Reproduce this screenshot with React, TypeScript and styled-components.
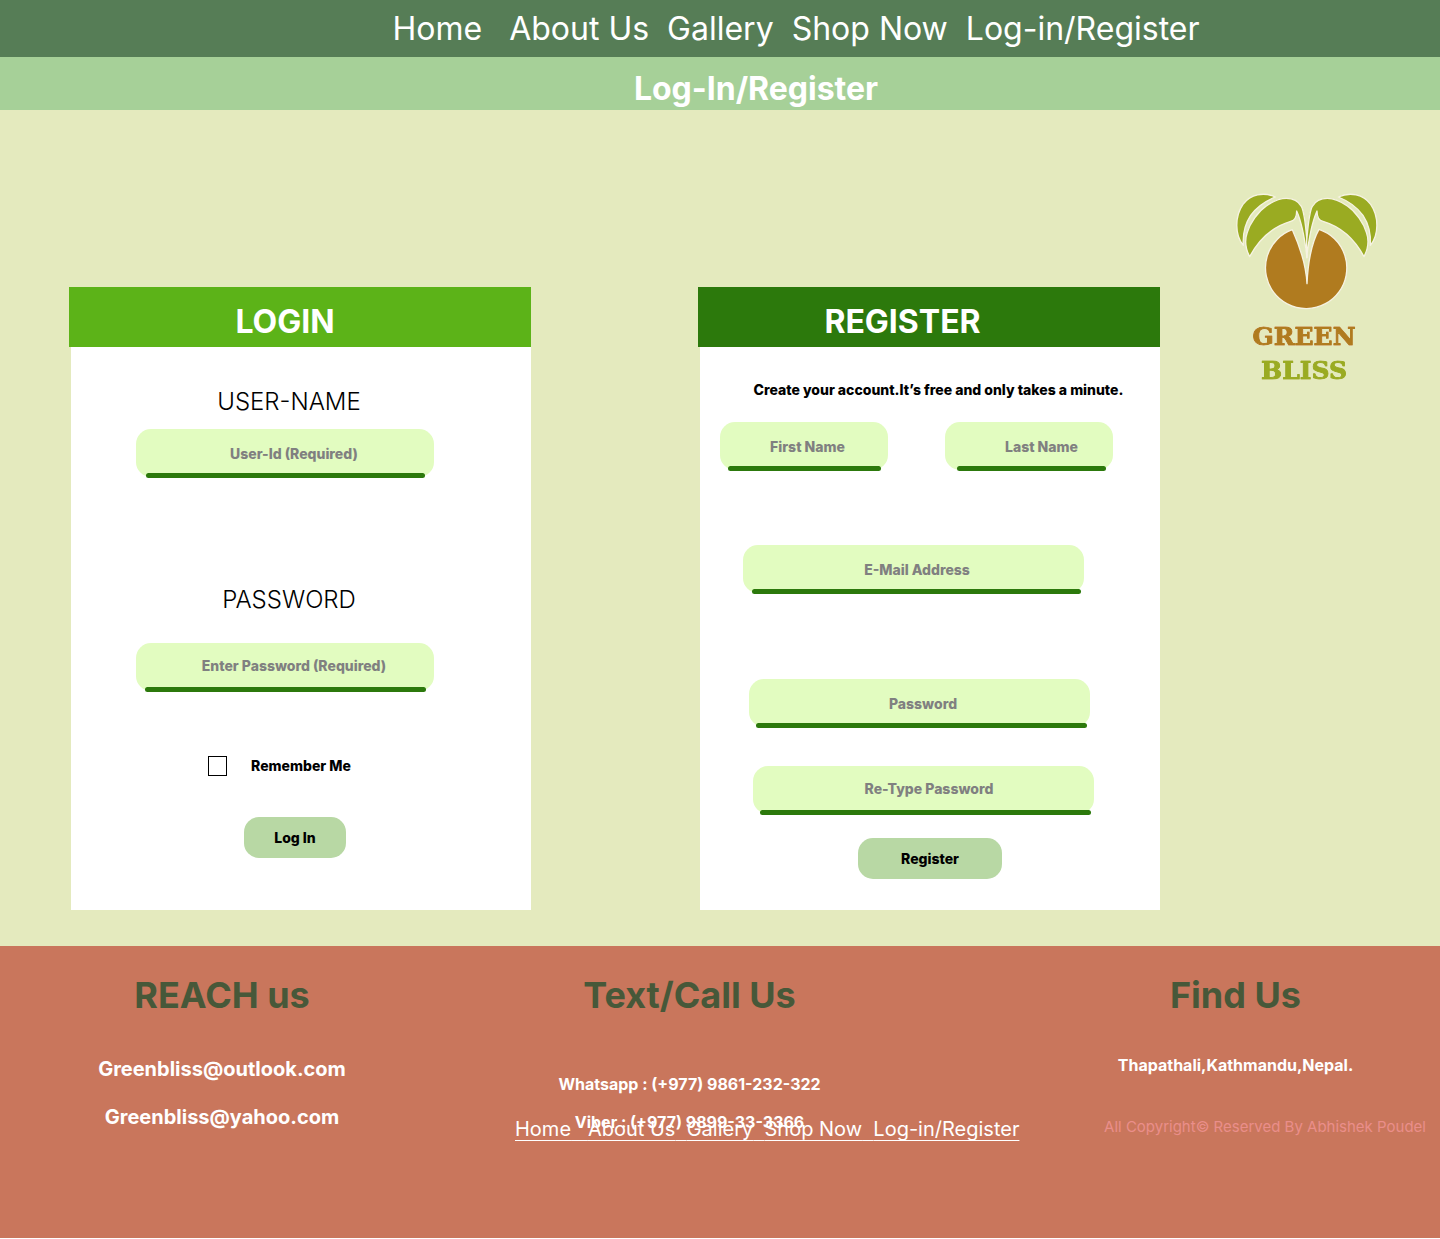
import React from "react";
import styled, { createGlobalStyle } from "styled-components";

const GlobalStyle = createGlobalStyle`
  * { box-sizing: border-box; }
  body {
    margin: 0;
    background: #ffffff;
    font-family: Inter, "Liberation Sans", sans-serif;
    font-optical-sizing: none;
    color: #000000;
  }
  h1, h2, p { margin: 0; }
`;

const Page = styled.div`
  background: #e4eabe;
  overflow-x: hidden;
`;

const TopBar = styled.header`
  padding: 9px 0 8px 152px;
  background: #567d56;
  text-align: center;
`;

const Menu = styled.nav<{ $size: number }>`
  font-size: ${(p) => p.$size}px;
  font-weight: 400;
  line-height: ${(p) => p.$size + 8}px;
  white-space: pre;
  color: #ffffff;
`;

const MenuLink = styled.a`
  color: inherit;
  text-decoration: none;
`;

const TitleBar = styled.div`
  padding: 12px 0 1px 72px;
  background: #a6d098;
  text-align: center;
`;

const PageTitle = styled.h1`
  font-size: 32px;
  font-weight: 700;
  line-height: 40px;
  color: #ffffff;
`;

const Main = styled.main`
  display: grid;
  grid-template-columns: 69fr 462fr 167fr 462fr 76fr 142fr 62fr;
  align-items: start;
  padding: 83px 0 36px;
`;

const Card = styled.form<{ $column: number }>`
  grid-column: ${(p) => p.$column};
  align-self: stretch;
  display: flex;
  flex-direction: column;
  margin-top: 94px;
`;

const CardHeader = styled.div<{ $color: string; $shift: number }>`
  padding: 15px ${(p) => p.$shift}px 5px 0;
  background: ${(p) => p.$color};
  text-align: center;
`;

const CardTitle = styled.h2`
  font-size: 32px;
  font-weight: 700;
  line-height: 40px;
  color: #ffffff;
`;

const CardBody = styled.div`
  flex: 1;
  margin-left: 2px;
  padding: 34px 0 31px;
  background: #ffffff;
`;

const Line = styled.div<{ $top?: number; $left?: number; $right?: number }>`
  display: flex;
  justify-content: center;
  align-items: center;
  gap: 24px;
  margin-top: ${(p) => p.$top ?? 0}px;
  padding-left: ${(p) => p.$left ?? 0}px;
  padding-right: ${(p) => p.$right ?? 0}px;
`;

const NameLine = styled(Line)`
  gap: 57px;
`;

const FieldLabel = styled.label`
  padding-top: 2px;
  font-size: 24px;
  font-weight: 300;
  line-height: 38px;
`;

const Note = styled.p`
  font-size: 14px;
  font-weight: 800;
  line-height: 18px;
`;

const FieldBox = styled.div<{ $width: number; $from: number; $to: number }>`
  position: relative;
  width: ${(p) => p.$width}px;
  max-width: 100%;

  &::after {
    content: "";
    position: absolute;
    left: ${(p) => p.$from}px;
    right: ${(p) => p.$to}px;
    bottom: -1px;
    height: 5px;
    border-radius: 3px;
    background: #2c790c;
  }
`;

const FieldInput = styled.input<{ $indent: number; $raised?: boolean }>`
  display: block;
  width: 100%;
  height: 48px;
  padding: ${(p) => (p.$raised ? "0 0 4px" : "1px 0 0")};
  padding-left: ${(p) => p.$indent}px;
  border: 0;
  border-radius: 15px;
  background: #e2fcc0;
  font-family: inherit;
  font-size: 14px;
  font-weight: 800;
  text-align: center;
  color: #000000;

  &::placeholder {
    color: #808080;
    opacity: 1;
  }
`;

const Tick = styled.input`
  appearance: none;
  width: 19px;
  height: 20px;
  margin: 0;
  border: 1px solid #000000;
  background: #ffffff;

  &:checked {
    background: #2c790c;
  }
`;

const TickLabel = styled.label`
  font-size: 14px;
  font-weight: 800;
  line-height: 20px;
`;

const Submit = styled.button<{ $width: number }>`
  width: ${(p) => p.$width}px;
  height: 41px;
  padding: 0;
  border: 0;
  border-radius: 15px;
  background: #b8d8a4;
  font-family: inherit;
  font-size: 14px;
  font-weight: 800;
  color: #000000;
`;

const Logo = styled.svg`
  grid-column: 6;
  display: block;
  width: 100%;
  height: auto;
  overflow: visible;
`;

const Wordmark = styled.g`
  font-family: "DejaVu Serif", serif;
  font-size: 75px;
  font-weight: 700;
  text-anchor: middle;
  stroke-width: 3px;
  stroke-linejoin: round;
  filter: drop-shadow(0 0 2px #fbf6ec) drop-shadow(0 0 1px #fbf6ec);
`;

const Footer = styled.footer`
  display: grid;
  grid-template-columns: 444fr 491fr 96fr 409fr;
  padding: 26px 0 99px;
  background: #c9765c;
  color: #ffffff;
  text-align: center;
`;

const FooterColumn = styled.section<{ $column: number }>`
  grid-column: ${(p) => p.$column};
  position: relative;
`;

const FooterTitle = styled.h2`
  font-size: 36px;
  font-weight: 700;
  line-height: 46px;
  color: #475839;
`;

const Contact = styled.a<{ $size: number; $top: number }>`
  display: block;
  margin-top: ${(p) => p.$top}px;
  font-size: ${(p) => p.$size}px;
  font-weight: 700;
  line-height: 24px;
  color: #ffffff;
  text-decoration: none;
`;

const Address = styled.p`
  margin-top: 35px;
  font-size: 16px;
  font-weight: 700;
  line-height: 24px;
`;

const Copyright = styled.p`
  margin-top: 38px;
  padding-right: 14px;
  font-size: 15px;
  font-weight: 400;
  line-height: 24px;
  text-align: right;
  color: #ea8e8a;
`;

const FooterMenu = styled.div`
  position: absolute;
  top: 143px;
  left: 71px;
  text-decoration: underline;
  text-decoration-thickness: 1px;
  text-decoration-skip-ink: none;
  text-underline-offset: 4px;
`;

const pages = ["Home   ", "About Us  ", "Gallery  ", "Shop Now  ", "Log-in/Register"];

function SiteMenu({ size, label }: { size: number; label: string }) {
  return (
    <Menu $size={size} aria-label={label}>
      {pages.map((page) => {
        const name = page.trimEnd();
        return (
          <React.Fragment key={name}>
            <MenuLink href="#">{name}</MenuLink>
            {page.slice(name.length)}
          </React.Fragment>
        );
      })}
    </Menu>
  );
}

type FieldProps = {
  id: string;
  hint: string;
  type?: string;
  width: number;
  from: number;
  to: number;
  indent: number;
  raised?: boolean;
  labelled?: boolean;
};

function Field({ id, hint, type = "text", width, from, to, indent, raised, labelled }: FieldProps) {
  return (
    <FieldBox $width={width} $from={from} $to={to}>
      <FieldInput
        id={id}
        type={type}
        placeholder={hint}
        aria-label={labelled ? undefined : hint}
        $indent={indent}
        $raised={raised}
      />
    </FieldBox>
  );
}

function LeafPair() {
  return (
    <>
      <path d="M72 197C46 166 46 110 71 74C94 44 132 36 168 52C138 64 112 82 94 107C76 134 70 166 72 197Z" />
      <path d="M91 231C78 206 76 180 84 158C92 130 116 96 141 79C162 64 182 56 201 56C222 56 238 66 246 80C256 98 258 130 263 184L263 234C258 190 250 134 232 94C232 112 228 122 214 125C160 141 118 180 91 231Z" />
    </>
  );
}

function GreenBlissLogo() {
  return (
    <Logo viewBox="50 40 426 570" role="img" aria-label="Green Bliss">
      <g stroke="#f6f3e2" strokeWidth="4" strokeLinejoin="round">
        <path
          fill="#b07b1f"
          d="M219 150C236 188 260 250 263 312C266 250 276 190 299 149A122 122 0 1 1 219 150Z"
        />
        <g fill="#9aab22">
          <LeafPair />
          <g transform="matrix(-1 0 0 1 525 0)">
            <LeafPair />
          </g>
        </g>
      </g>
      <Wordmark>
        <text x="254" y="497" fill="#b07b1f" stroke="#b07b1f">GREEN</text>
        <text x="254" y="598" fill="#9aab22" stroke="#9aab22">BLISS</text>
      </Wordmark>
    </Logo>
  );
}

export default function App() {
  return (
    <Page>
      <GlobalStyle />
      <TopBar>
        <SiteMenu size={32} label="Main" />
      </TopBar>
      <TitleBar>
        <PageTitle>Log-In/Register</PageTitle>
      </TitleBar>

      <Main>
        <Card $column={2}>
          <CardHeader $color="#5cb318" $shift={30}>
            <CardTitle>LOGIN</CardTitle>
          </CardHeader>
          <CardBody>
            <Line $right={24}>
              <FieldLabel htmlFor="user-id">USER-NAME</FieldLabel>
            </Line>
            <Line $top={8} $right={32}>
              <Field id="user-id" hint="User-Id (Required)" width={298} from={10} to={9} indent={18} labelled />
            </Line>
            <Line $top={102} $right={24}>
              <FieldLabel htmlFor="login-password">PASSWORD</FieldLabel>
            </Line>
            <Line $top={24} $right={32}>
              <Field
                id="login-password"
                type="password"
                hint="Enter Password (Required)"
                width={298}
                from={9}
                to={8}
                indent={18}
                raised
                labelled
              />
            </Line>
            <Line $top={65} $right={43}>
              <Tick id="remember" type="checkbox" />
              <TickLabel htmlFor="remember">Remember Me</TickLabel>
            </Line>
            <Line $top={41} $right={12}>
              <Submit type="button" $width={102}>Log In</Submit>
            </Line>
          </CardBody>
        </Card>

        <Card $column={4}>
          <CardHeader $color="#2c790c" $shift={53}>
            <CardTitle>REGISTER</CardTitle>
          </CardHeader>
          <CardBody>
            <Line $left={17}>
              <Note>Create your account.It’s free and only takes a minute.</Note>
            </Line>
            <NameLine $top={23} $right={27}>
              <Field id="first-name" hint="First Name" width={168} from={8} to={7} indent={7} />
              <Field id="last-name" hint="Last Name" width={168} from={12} to={7} indent={25} />
            </NameLine>
            <Line $top={75} $right={33}>
              <Field id="email" type="email" hint="E-Mail Address" width={341} from={9} to={3} indent={7} />
            </Line>
            <Line $top={86} $right={21}>
              <Field id="new-password" type="password" hint="Password" width={341} from={7} to={3} indent={7} />
            </Line>
            <Line $top={39} $right={13}>
              <Field
                id="repeat-password"
                type="password"
                hint="Re-Type Password"
                width={341}
                from={7}
                to={3}
                indent={11}
                raised
              />
            </Line>
            <Line $top={24}>
              <Submit type="button" $width={144}>Register</Submit>
            </Line>
          </CardBody>
        </Card>

        <GreenBlissLogo />
      </Main>

      <Footer>
        <FooterColumn $column={1}>
          <FooterTitle>REACH us</FooterTitle>
          <Contact $size={20} $top={39} href="mailto:Greenbliss@outlook.com">Greenbliss@outlook.com</Contact>
          <Contact $size={20} $top={24} href="mailto:Greenbliss@yahoo.com">Greenbliss@yahoo.com</Contact>
        </FooterColumn>
        <FooterColumn $column={2}>
          <FooterTitle>Text/Call Us</FooterTitle>
          <Contact $size={16} $top={54} href="tel:+9779861232322">Whatsapp : (+977) 9861-232-322</Contact>
          <Contact $size={16} $top={14} href="tel:+9779899333366">Viber : (+977) 9899-33-3366</Contact>
          <FooterMenu>
            <SiteMenu size={20} label="Footer" />
          </FooterMenu>
        </FooterColumn>
        <FooterColumn $column={4}>
          <FooterTitle>Find Us</FooterTitle>
          <Address>Thapathali,Kathmandu,Nepal.</Address>
          <Copyright>All Copyright© Reserved By Abhishek Poudel</Copyright>
        </FooterColumn>
      </Footer>
    </Page>
  );
}
